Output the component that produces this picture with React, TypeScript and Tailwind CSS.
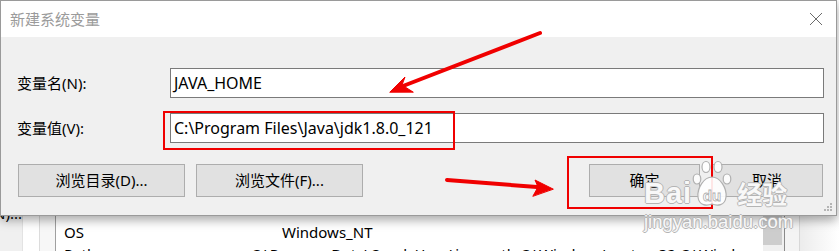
import React from "react";

const font = "font-['Noto_Sans','Noto_Sans_CJK_SC',sans-serif]";

function BackWindow() {
  return (
    <div className="flex h-full w-full">
      <div className="flex w-[23px] justify-end overflow-hidden border-r border-[#e3e3e3] bg-[#f0f0f0] pt-[203px]">
        <span className="whitespace-nowrap text-[15px] leading-[20px] text-black">(N)...</span>
      </div>
      <div className="w-[17px] border-r border-[#dcdcdc] bg-white" />
      <div className="w-[16px] border-r border-[#a0a0a0] bg-[#f7f7f7]" />
      <div className="w-[707px] overflow-hidden bg-white pt-[221px] text-[15px] leading-[22px] text-black">
        <div className="flex whitespace-nowrap pl-[8px]">
          <span className="w-[218px]">OS</span>
          <span>Windows_NT</span>
        </div>
        <div className="flex whitespace-nowrap pl-[8px]">
          <span className="w-[218px]">Path</span>
          <span>C:\ProgramData\Oracle\Java\javapath;C:\Windows\system32;C:\Windows</span>
        </div>
      </div>
      <div className="w-[21px] bg-[#f0f0f0] pt-[215px]">
        <div className="h-[30px] w-[19px] bg-[#cdcdcd]" />
      </div>
      <div className="w-[16px] border-l border-r border-l-[#8a8a8a] border-r-[#d8d8d8] bg-[#f4f4f4]" />
      <div className="flex-1 bg-gradient-to-r from-[#ececec] to-white" />
    </div>
  );
}

function Btn({ label, w }: { label: string; w: string }) {
  return (
    <div
      className={`flex h-[33px] items-center justify-center border border-[#adadad] bg-[#e1e1e1] text-[15px] text-black ${w}`}
    >
      {label}
    </div>
  );
}

function Dialog() {
  return (
    <div className="absolute left-0 top-0 flex h-[216px] w-[837px] flex-col border border-[#9a9a9a] bg-[#f0f0f0] shadow-[0_4px_10px_rgba(0,0,0,0.35)]">
      <div className="flex h-[36px] items-center justify-between bg-white pl-[9px] pr-[13px]">
        <span className="text-[15px] text-[#9b9b9b]">新建系统变量</span>
        <svg width="14" height="14" viewBox="0 0 14 14">
          <path d="M1 1L13 13M13 1L1 13" stroke="#6b6b6b" strokeWidth="1" />
        </svg>
      </div>
      <div className="flex flex-1 flex-col pt-[31px]">
        <div className="flex h-[30px] items-center">
          <span className="w-[169px] pl-[16px] text-[15px] text-black">变量名(N):</span>
          <div className="flex h-[30px] w-[654px] items-center border border-[#7a7a7a] bg-white pl-[3px] text-[16px] text-black">
            JAVA_HOME
          </div>
        </div>
        <div className="mt-[15px] flex h-[30px] items-center">
          <span className="w-[169px] pl-[16px] text-[15px] text-black">变量值(V):</span>
          <div className="flex h-[30px] w-[654px] items-center border border-[#7a7a7a] bg-white pl-[3px] text-[16px] text-black">
            C:\Program Files\Java\jdk1.8.0_121
          </div>
        </div>
        <div className="mt-[21px] flex pl-[17px] pr-[13px]">
          <Btn label="浏览目录(D)..." w="w-[167px]" />
          <div className="ml-[11px]">
            <Btn label="浏览文件(F)..." w="w-[167px]" />
          </div>
          <div className="ml-auto flex gap-[11px]">
            <Btn label="确定" w="w-[111px]" />
            <Btn label="取消" w="w-[112px]" />
          </div>
        </div>
      </div>
      <svg className="absolute bottom-[3px] right-[3px]" width="9" height="9" viewBox="0 0 9 9">
        <g fill="#b5b5b5">
          <rect x="6" y="0" width="2" height="2" />
          <rect x="3" y="3" width="2" height="2" />
          <rect x="6" y="3" width="2" height="2" />
          <rect x="0" y="6" width="2" height="2" />
          <rect x="3" y="6" width="2" height="2" />
          <rect x="6" y="6" width="2" height="2" />
        </g>
      </svg>
    </div>
  );
}

function Annotations() {
  return (
    <>
      <div className="absolute left-[163px] top-[111px] h-[39px] w-[292px] border-2 border-[#f00000]" />
      <div className="absolute left-[567px] top-[156px] h-[53px] w-[146px] border-2 border-[#f00000]" />
      <svg className="absolute left-0 top-0" width="839" height="251" viewBox="0 0 839 251">
        <g fill="#f00000" stroke="#f00000" strokeLinecap="round">
          <line x1="540" y1="33" x2="403" y2="86" strokeWidth="4" />
          <polygon points="390,92 405,77 402,85 413,92" strokeWidth="1" strokeLinejoin="round" />
          <line x1="447" y1="180" x2="537" y2="187" strokeWidth="4" />
          <polygon points="553,189 535,180 538,187 533,196" strokeWidth="1" strokeLinejoin="round" />
        </g>
      </svg>
    </>
  );
}

function Watermark() {
  const txt =
    "text-white/90 [text-shadow:1px_0_#b4b4b4,-1px_0_#b4b4b4,0_1px_#b4b4b4,0_-1px_#b4b4b4]";
  return (
    <div className="pointer-events-none absolute left-[644px] top-[160px] flex flex-col">
      <div className="flex items-end">
        <span
          className={`-mb-[2px] text-[29px] font-bold leading-[30px] tracking-[1px] ${txt} font-['Liberation_Sans',sans-serif]`}
        >
          Bai
        </span>
        <svg width="40" height="48" viewBox="0 0 40 48" className="-mb-[2px]">
          <g fill="rgba(255,255,255,0.9)" stroke="#b0b0b0" strokeWidth="1.2">
            <ellipse cx="14" cy="7" rx="4" ry="5.5" />
            <ellipse cx="26" cy="7" rx="4" ry="5.5" />
            <ellipse cx="5" cy="19" rx="3.8" ry="5" />
            <ellipse cx="35" cy="19" rx="3.8" ry="5" />
            <path d="M20 17 C12 17 5 28 6 37 C7 46 15 46 20 44 C25 46 33 46 34 37 C35 28 28 17 20 17 Z" />
          </g>
          <text
            x="20"
            y="41"
            textAnchor="middle"
            fontSize="15"
            fontWeight="bold"
            fill="#ffffff"
            stroke="#b0b0b0"
            strokeWidth="0.8"
            fontFamily="Liberation Sans, sans-serif"
          >
            du
          </text>
        </svg>
        <span
          className={`-mb-[2px] ml-[5px] text-[25px] font-bold leading-[30px] ${txt} font-['Noto_Sans_CJK_SC',sans-serif]`}
        >
          经验
        </span>
      </div>
      <span className={`mt-[5px] text-[18.5px] leading-[22px] ${txt} font-['Liberation_Sans',sans-serif]`}>
        jingyan.baidu.com
      </span>
    </div>
  );
}

export default function App() {
  return (
    <div className={`relative h-[251px] w-[839px] overflow-hidden bg-white ${font}`}>
      <BackWindow />
      <Dialog />
      <Annotations />
      <Watermark />
    </div>
  );
}
